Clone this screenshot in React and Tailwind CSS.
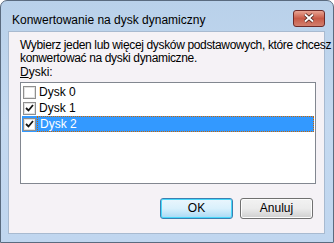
import React, { useState } from 'react';

const font = { fontFamily: '"Liberation Sans", Arial, sans-serif' };

const Check = ({ checked }) => (
  <div className="w-[13px] h-[13px] border border-[#8f8f8f] bg-gradient-to-br from-[#f4f4f4] to-white flex items-center justify-center shrink-0">
    <div className="w-[11px] h-[11px] border border-[#e2e2e2] bg-white flex items-center justify-center">
      {checked && (
        <svg width="9" height="8" viewBox="0 0 9 8">
          <path d="M1 4 L3.5 6.5 L8 1" fill="none" stroke="#151515" strokeWidth="1.8" />
        </svg>
      )}
    </div>
  </div>
);

const Row = ({ label, checked, selected }) => (
  <div className={`h-[16px] flex items-center ${selected ? 'bg-[#3399ff]' : ''}`}>
    <div className="ml-[1px]">
      <Check checked={checked} />
    </div>
    <div
      className={`ml-[1px] h-full flex-1 flex items-center pl-[2px] ${
        selected ? 'text-white border border-dotted border-[#cc6600]' : 'text-black'
      }`}
    >
      {label}
    </div>
  </div>
);

export default function App() {
  const [disks] = useState([
    { label: 'Dysk 0', checked: false },
    { label: 'Dysk 1', checked: true },
    { label: 'Dysk 2', checked: true, selected: true }
  ]);

  return (
    <div
      className="w-[334px] h-[243px] rounded-t-[7px] border border-[#5a6b7f] bg-gradient-to-b from-[#b9d1ea] via-[#c4d9f0] to-[#c0d6ef] flex flex-col text-[12px]"
      style={font}
    >
      {/* TITLE BAR */}
      <div className="h-[30px] flex items-center justify-between pl-[11px] pr-[8px]">
        <span className="text-black mt-[7px]">Konwertowanie na dysk dynamiczny</span>
        <div className="w-[32px] h-[17px] mt-[4px] rounded-[3px] border border-[#6d2a28] bg-gradient-to-b from-[#e8a493] via-[#c75a47] to-[#d27f6e] flex items-center justify-center">
          <svg width="12" height="10" viewBox="0 0 12 10">
            <path d="M2 1.5 L10 8.5 M10 1.5 L2 8.5" stroke="#3a1510" strokeWidth="3.4" />
            <path d="M2 1.5 L10 8.5 M10 1.5 L2 8.5" stroke="white" strokeWidth="2" />
          </svg>
        </div>
      </div>

      {/* CLIENT */}
      <div className="ml-[7px] mr-[8px] h-[203px] bg-[#f5f2f6] border border-[#a8bad0] pl-[11px] pr-[10px] pt-[7px] leading-[13px] text-black">
        <p className="whitespace-nowrap tracking-[-0.35px]">
          Wybierz jeden lub więcej dysków podstawowych, które chcesz
        </p>
        <p className="tracking-[-0.35px]">konwertować na dyski dynamiczne.</p>
        <p className="mt-[1px]">
          <span className="underline">D</span>yski:
        </p>

        <div className="mt-[3px] w-[296px] h-[102px] border border-[#828790] bg-white p-[1px]">
          {disks.map((d, i) => (
            <Row key={i} {...d} />
          ))}
        </div>

        <div className="mt-[14px] flex justify-end gap-[7px] pr-[1px]">
          <button className="w-[73px] h-[21px] rounded-[3px] border border-[#3c7fb1] bg-gradient-to-b from-[#eaf6fd] via-[#d9f0fc] to-[#a7d9f5] shadow-[inset_0_0_0_1px_#48d8fb]">
            OK
          </button>
          <button className="w-[73px] h-[21px] rounded-[3px] border border-[#707070] bg-gradient-to-b from-[#f2f2f2] via-[#ebebeb] to-[#cfcfcf] shadow-[inset_0_0_0_1px_#fcfcfc]">
            Anuluj
          </button>
        </div>
      </div>
    </div>
  );
}
